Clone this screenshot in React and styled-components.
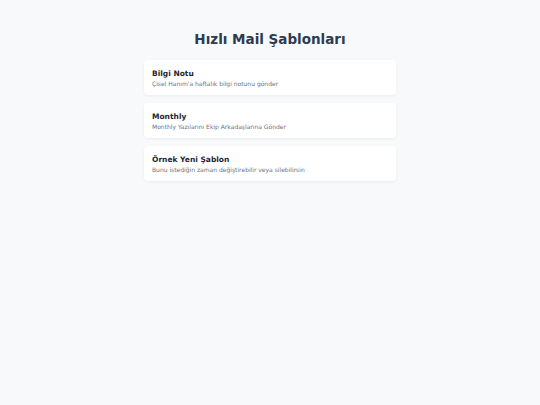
import styled, { createGlobalStyle } from "styled-components";

const GlobalStyle = createGlobalStyle`
  html, body {
    margin: 0;
    padding: 0;
    background: #f7f9fb;
    font-family: "DejaVu Sans", "Noto Sans", sans-serif;
  }
`;

const templates = [
  { title: "Bilgi Notu", desc: "Çisel Hanım'a haftalık bilgi notunu gönder" },
  { title: "Monthly", desc: "Monthly Yazılarını Ekip Arkadaşlarına Gönder" },
  { title: "Örnek Yeni Şablon", desc: "Bunu istediğin zaman değiştirebilir veya silebilirsin" },
];

const App = () => {
  return (
    <>
      <GlobalStyle />
      <Page>
        <Heading>Hızlı Mail Şablonları</Heading>
        <List>
          {templates.map((t) => (
            <Card key={t.title}>
              <CardTitle>{t.title}</CardTitle>
              <CardDesc>{t.desc}</CardDesc>
            </Card>
          ))}
        </List>
      </Page>
    </>
  );
};

export default App;

const Page = styled.div`
  width: 252px;
  margin: 0 auto;
  padding-top: 31px;
  min-height: 405px;
  box-sizing: border-box;
`;

const Heading = styled.h1`
  margin: 0 0 12px;
  text-align: center;
  font-size: 13.5px;
  line-height: 17px;
  font-weight: bold;
  color: #2d3b4e;
`;

const List = styled.div`
  display: flex;
  flex-direction: column;
  gap: 8px;
`;

const Card = styled.div`
  background: #ffffff;
  border-radius: 4px;
  box-shadow: 0 1px 3px rgba(0, 0, 0, 0.06);
  padding: 9px 8px 7px;
  height: 35px;
  box-sizing: border-box;
  cursor: pointer;
`;

const CardTitle = styled.div`
  font-size: 7.5px;
  line-height: 10px;
  font-weight: bold;
  color: #1f2533;
`;

const CardDesc = styled.div`
  margin-top: 1px;
  font-size: 6px;
  line-height: 8px;
  color: #6b7280;
`;
